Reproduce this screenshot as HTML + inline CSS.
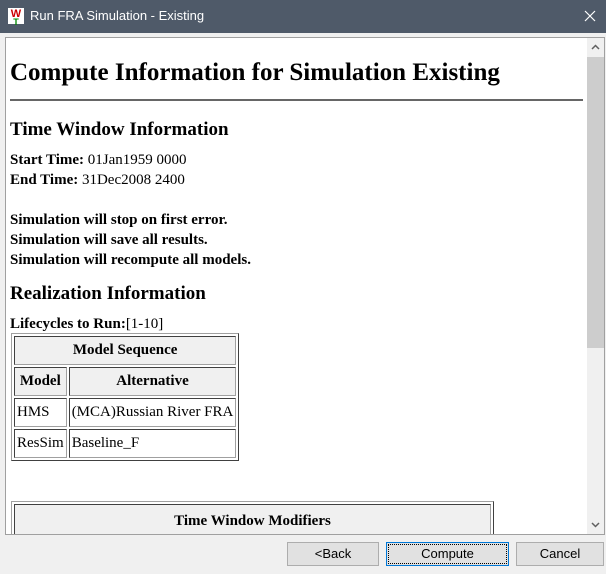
<!DOCTYPE html>
<html><head><style>
*{margin:0;padding:0;box-sizing:border-box}
body{width:606px;height:574px;background:#f0f0f0;position:relative;overflow:hidden;font-family:"Liberation Serif",serif;color:#000}
.a{position:absolute;white-space:nowrap}
.t{font-size:15px;line-height:17px}
b{font-weight:bold}
.tb{position:absolute;border-collapse:separate;border-spacing:2px;border:1px solid;border-color:#a0a0a0 #404040 #404040 #a0a0a0;font-size:15px}
.tb td,.tb th{border:1px solid;border-color:#404040 #a0a0a0 #a0a0a0 #404040;padding:0 2px;height:29px}
.tb th{background:#f0f0f0;text-align:center}
.btn{position:absolute;top:542px;height:24px;background:#e1e1e1;border:1px solid #adadad;font-family:"Liberation Sans",sans-serif;font-size:13px;text-align:center;line-height:22px}
</style></head><body>
<div class="a" style="left:0;top:0;width:606px;height:33px;background:#4f5a69"></div>
<div class="a" style="left:8px;top:8px;width:16px;height:16px;background:#fff;font:bold 11px 'Liberation Sans',sans-serif;color:#c00;text-align:center;line-height:12px">W<div style="color:#080;font-size:9px;line-height:5px">T</div></div>
<div class="a" style="left:30px;top:8px;font:13px 'Liberation Sans',sans-serif;color:#fff">Run FRA Simulation - Existing</div>
<svg class="a" style="left:584px;top:10px" width="12" height="12"><path d="M1 1L11 11M11 1L1 11" stroke="#fff" stroke-width="1.2"/></svg>
<div class="a" style="left:5px;top:37px;width:600px;height:498px;background:#fff;border:1px solid #a0a0a0;overflow:hidden">
 <div class="a" style="left:581px;top:0;width:17px;height:496px;background:#f0f0f0"></div>
 <div class="a" style="left:581px;top:19px;width:17px;height:291px;background:#cdcdcd"></div>
 <svg class="a" style="left:585px;top:6px" width="9" height="6"><path d="M1 5L4.5 1.5L8 5" stroke="#606060" stroke-width="1.5" fill="none"/></svg>
 <svg class="a" style="left:585px;top:484px" width="9" height="6"><path d="M1 1L4.5 4.5L8 1" stroke="#606060" stroke-width="1.5" fill="none"/></svg>
 <div class="a" style="left:4px;top:20px;font:bold 25px/30px 'Liberation Serif',serif">Compute Information for Simulation Existing</div>
 <div class="a" style="left:4px;top:61px;width:573px;height:2px;background:#666"></div>
 <div class="a" style="left:4px;top:81px;font:bold 19px/22px 'Liberation Serif',serif">Time Window Information</div>
 <div class="a t" style="left:4px;top:114px"><b>Start Time:</b> 01Jan1959 0000</div>
 <div class="a t" style="left:4px;top:134px"><b>End Time:</b> 31Dec2008 2400</div>
 <div class="a t" style="left:4px;top:174px"><b>Simulation will stop on first error.</b></div>
 <div class="a t" style="left:4px;top:194px"><b>Simulation will save all results.</b></div>
 <div class="a t" style="left:4px;top:214px"><b>Simulation will recompute all models.</b></div>
 <div class="a" style="left:4px;top:245px;font:bold 19px/22px 'Liberation Serif',serif">Realization Information</div>
 <div class="a t" style="left:4px;top:278px"><b>Lifecycles to Run:</b>[1-10]</div>
 <table class="tb" style="left:5px;top:295px;width:227px">
  <tr><th colspan="2">Model Sequence</th></tr>
  <tr><th>Model</th><th>Alternative</th></tr>
  <tr><td>HMS</td><td>(MCA)Russian River FRA</td></tr>
  <tr><td>ResSim</td><td>Baseline_F</td></tr>
 </table>
 <div class="a" style="left:5px;top:463px;width:483px;height:40px;border:1px solid;border-color:#a0a0a0 #404040 #404040 #a0a0a0"></div>
 <div class="a" style="left:8px;top:466px;width:477px;height:40px;border:1px solid;border-color:#404040 #a0a0a0 #a0a0a0 #404040;background:#f0f0f0;text-align:center;font:bold 15px/32px 'Liberation Serif',serif">Time Window Modifiers</div>
</div>
<div class="btn" style="left:287px;width:92px">&lt;Back</div>
<div class="btn" style="left:386px;width:123px;border:1px solid #0078d7;outline:1px dotted #000;outline-offset:-3px">Compute</div>
<div class="btn" style="left:516px;width:88px">Cancel</div>
</body></html>
